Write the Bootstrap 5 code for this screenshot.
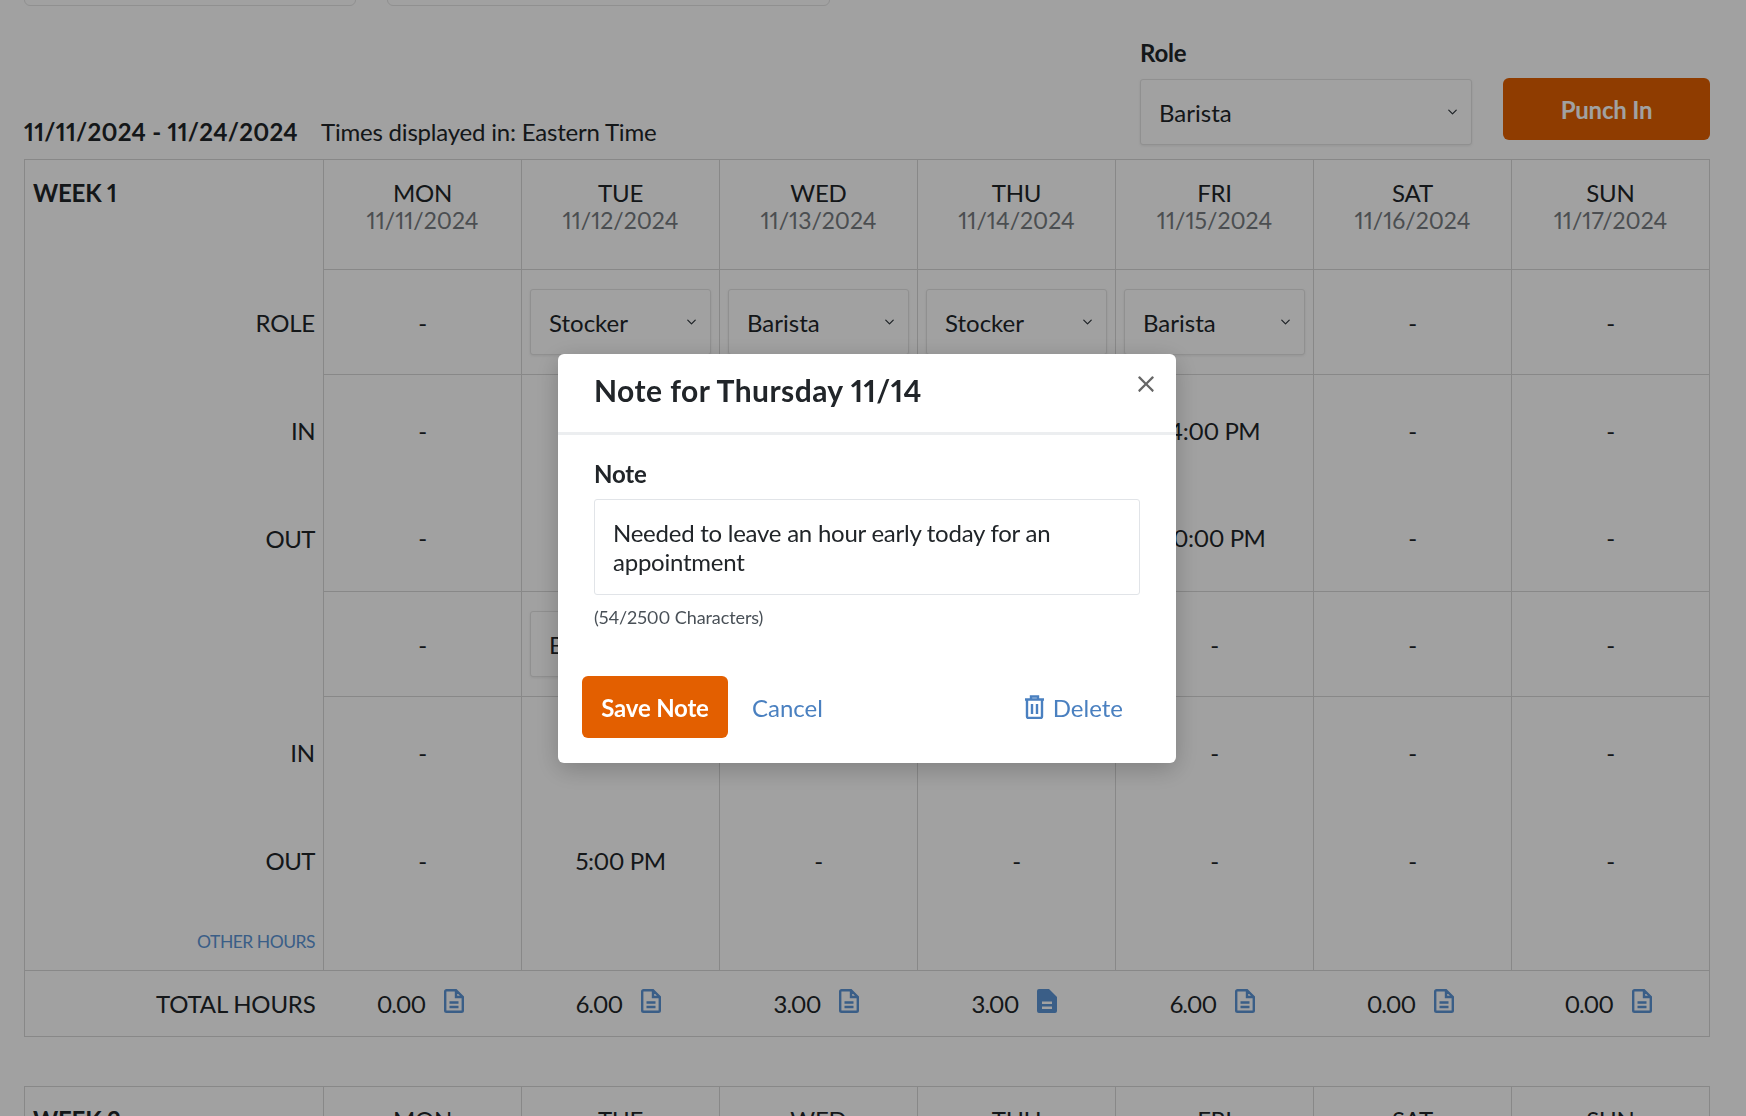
<!DOCTYPE html>
<html lang="en"><head><meta charset="utf-8"><title>Timesheet</title>
<link href="https://cdn.jsdelivr.net/npm/bootstrap@5.3.0/dist/css/bootstrap.min.css" rel="stylesheet">
<style>
html,body{height:1116px;overflow:hidden}
body{font-family:Lato,"Liberation Sans",sans-serif;font-size:24px;line-height:29px;color:#212529;background:#fff;font-variant-numeric:proportional-nums;letter-spacing:-.2px}
.sheet{padding:0 36px 0 24px}
.top-fields{margin-top:-54px;height:60px;gap:31px}
.top-fields .form-control{height:60px;border-color:#e4e4e4}
.f1{width:332px}.f2{width:443px}
.bar{height:153px;margin-bottom:0;align-items:flex-end;padding-bottom:13px}
.range{font-weight:700;margin-right:23px;letter-spacing:.25px}
.role-box{width:332px;margin-right:31px;position:relative;top:-1px}
.role-box label{font-weight:700;display:block;margin-bottom:12px;line-height:29px}
.form-select.pick{height:66px;font-size:24px;line-height:29px;letter-spacing:0;color:#212529;padding:0 34px 0 18px;border-color:#e4e4e4;border-radius:3px;background-size:13px 10px;background-position:right 12px center;box-shadow:0 1px 3px rgba(0,0,0,.08)}
.punch,.save{background:#e35f00;border:0;color:#fff;font-weight:700;font-size:24px;line-height:29px;letter-spacing:-.2px;border-radius:6px}
.punch{width:207px;height:62px;color:#fff;margin-bottom:6px}
.save{width:146px;height:62px}
.punch:hover,.save:hover{background:#e35f00;color:#fff}
.grid{table-layout:fixed;width:1686px;margin:0;border:0;--bs-table-color:#212529}
.grid>tbody>tr{border-width:0}
.grid>tbody>tr>th,.grid>tbody>tr>td{padding:0 8px;vertical-align:middle;text-align:center;font-weight:400;border:1px solid #d8d8d8}
.grid>tbody>tr>.lab{text-align:right;border-top:0;border-bottom:0}
.grid>tbody>.hd>td,.grid>tbody>.hd>th{height:110px;vertical-align:top;padding-top:18px}
.grid>tbody>.hd>.wk{text-align:left;font-weight:700;border-bottom:0}
.dt{display:block;color:#777c81;font-size:23px;line-height:26px;letter-spacing:0}
.grid>tbody>.r-role>*{height:105px}
.grid>tbody>.r-in>*{height:108px;border-bottom:0;padding-top:4px;letter-spacing:-.5px}
.grid>tbody>.r-out>*{height:109px;border-top:0;padding-top:2px;letter-spacing:-.5px}
.grid>tbody>.r-in2>*{height:108px;border-bottom:0;padding-top:4px}
.grid>tbody>.r-out2>*{height:108px;border-top:0;border-bottom:0;padding-top:4px;letter-spacing:-.5px}
.grid>tbody>.r-oth>*{height:58px;border-top:0;vertical-align:bottom;padding-bottom:17px}
.grid>tbody>.r-tot>*{height:66px;border-left:0;border-right:0}
.grid>tbody>.r-tot>.lab{border:1px solid #d8d8d8;border-right:0}
.grid>tbody>.r-tot>td:last-child{border-right:1px solid #d8d8d8}
.other{font-size:17.5px;line-height:20px;letter-spacing:-.5px;color:#5c95d6;text-decoration:none}
.tot{display:inline-flex;align-items:center;gap:19px;position:relative;left:-2px;letter-spacing:-1px}
.tot svg{width:20px;height:24px;color:#5c95d6;margin-top:-5px}
.week2{margin-top:49px}
.modal-backdrop.dim{opacity:.37}
.modal.note{display:block;padding-right:12px;overflow:hidden}
.note .modal-dialog{max-width:618px;margin:354px auto 0}
.note .modal-content{height:409px;border:0;border-radius:6px;box-shadow:0 6px 24px rgba(0,0,0,.22)}
.note .modal-header{height:81px;padding:0 36px;border-bottom:3px solid #eceef0;align-items:flex-start}
.note .modal-title{font-size:30px;line-height:36px;font-weight:700;margin-top:18px;color:#212529;letter-spacing:.45px}
.note .btn-close{position:absolute;top:21px;right:21px;width:18px;height:18px;padding:0;margin:0;background-size:18px;opacity:.6}
.note .modal-body{padding:24px 36px 0;height:241px;flex:none}
.note label{font-weight:700;display:block;margin-bottom:11px}
.note textarea.form-control{height:96px;font-size:24px;line-height:29px;letter-spacing:-.25px;padding:18px 18px 0;border-color:#e1e4e8;border-radius:3px;resize:none;color:#212529;box-shadow:none}
.count{font-size:18px;line-height:22px;color:#495057;margin-top:11px;letter-spacing:-.1px}
.note .modal-footer{padding:0 53px 0 24px;border:0;justify-content:flex-start;gap:24px;flex-wrap:nowrap}
.note .modal-footer>*{margin:0}
.lnk{color:#4a80c0;text-decoration:none;font-size:24px;line-height:29px;letter-spacing:0}
.del{margin-left:auto!important;display:inline-flex;align-items:center;gap:8px}
.del svg{width:21px;height:24px}
</style></head>
<body>
<div class="sheet">
  <div class="d-flex top-fields"><input class="form-control f1" aria-label="Filter"><input class="form-control f2" aria-label="Search"></div>
  <div class="d-flex bar justify-content-between">
    <div><span class="range">11/11/2024 - 11/24/2024</span><span>Times displayed in: Eastern Time</span></div>
    <div class="d-flex align-items-end">
      <div class="role-box"><label>Role</label><select class="form-select pick"><option>Barista</option></select></div>
      <button class="btn punch">Punch In</button>
    </div>
  </div>
  <table class="table table-bordered grid" id="w1"></table>
  <table class="table table-bordered grid week2" id="w2"></table>
</div>
<div class="modal-backdrop dim"></div>
<div class="modal note" tabindex="-1">
  <div class="modal-dialog"><div class="modal-content">
    <div class="modal-header"><h5 class="modal-title">Note for Thursday 11/14</h5><button type="button" class="btn-close" aria-label="Close"></button></div>
    <div class="modal-body">
      <label for="nt">Note</label>
      <textarea class="form-control" id="nt">Needed to leave an hour early today for an appointment</textarea>
      <div class="count">(54/2500 Characters)</div>
    </div>
    <div class="modal-footer">
      <button class="btn save">Save Note</button>
      <a href="#" class="lnk">Cancel</a>
      <a href="#" class="lnk del"><svg viewBox="0 0 21 24" fill="none" stroke="currentColor" stroke-width="2.4"><path d="M1 4.500h19M7 4.500V1.500h7v3M3 4.500v17a1.500 1.500 0 0 0 1.500 1.500h12a1.500 1.500 0 0 0 1.500-1.500v-17M8 9v10M13 9v10"/></svg>Delete</a>
    </div>
  </div></div>
</div>
<script>
var days=[['MON','11/11/2024'],['TUE','11/12/2024'],['WED','11/13/2024'],['THU','11/14/2024'],['FRI','11/15/2024'],['SAT','11/16/2024'],['SUN','11/17/2024']];
function cols(){return '<colgroup><col style="width:299px">'+days.map(function(){return '<col>'}).join('')+'</colgroup>'}
function hd(w,d){return '<tr class="hd"><th class="wk">'+w+'</th>'+d.map(function(x){return '<td>'+x[0]+'<span class="dt">'+x[1]+'</span></td>'}).join('')+'</tr>'}
function sel(v){return v=='-'?'-':'<select class="form-select pick"><option>'+v+'</option></select>'}
function row(c,l,v,f){return '<tr class="'+c+'"><th class="lab">'+l+'</th>'+v.map(function(x){return '<td>'+(f?f(x):x)+'</td>'}).join('')+'</tr>'}
function icon(fill){return fill
 ?'<svg viewBox="0 0 20 24"><path fill="currentColor" fill-rule="evenodd" d="M2 0h10l8 8v14a2 2 0 0 1-2 2H2a2 2 0 0 1-2-2V2a2 2 0 0 1 2-2zM5 12.500v2.500h10v-2.500zM5 17.500v2.500h10v-2.500z"/></svg>'
 :'<svg viewBox="0 0 20 24" fill="none" stroke="currentColor" stroke-width="2.400"><path d="M2.500 1.200H12l6.800 6.800v13.500a1.300 1.300 0 0 1-1.300 1.300h-15a1.300 1.300 0 0 1-1.300-1.300V2.500a1.300 1.300 0 0 1 1.300-1.300zM12 1.200V8h6.800M5.500 13.500h9M5.500 18h9"/></svg>'}
document.getElementById('w1').innerHTML=cols()+'<tbody>'+hd('WEEK 1',days)
+row('r-role','ROLE',['-','Stocker','Barista','Stocker','Barista','-','-'],sel)
+row('r-in','IN',['-','','','','4:00 PM','-','-'])
+row('r-out','OUT',['-','','','','10:00 PM','-','-'])
+row('r-role','',['-','Barista','','','-','-','-'],sel)
+row('r-in2','IN',['-','','','','-','-','-'])
+row('r-out2','OUT',['-','5:00 PM','-','-','-','-','-'])
+row('r-oth','<a href="#" class="other">OTHER HOURS</a>',['','','','','','',''])
+'<tr class="r-tot"><th class="lab">TOTAL HOURS</th>'+['0.00','6.00','3.00','3.00','6.00','0.00','0.00'].map(function(v,i){return '<td><span class="tot">'+v+icon(i==3)+'</span></td>'}).join('')+'</tr></tbody>';
document.getElementById('w2').innerHTML=cols()+'<tbody>'+hd('WEEK 2',days)+'</tbody>';
</script>
<script src="https://cdn.jsdelivr.net/npm/bootstrap@5.3.0/dist/js/bootstrap.bundle.min.js"></script>
</body></html>
